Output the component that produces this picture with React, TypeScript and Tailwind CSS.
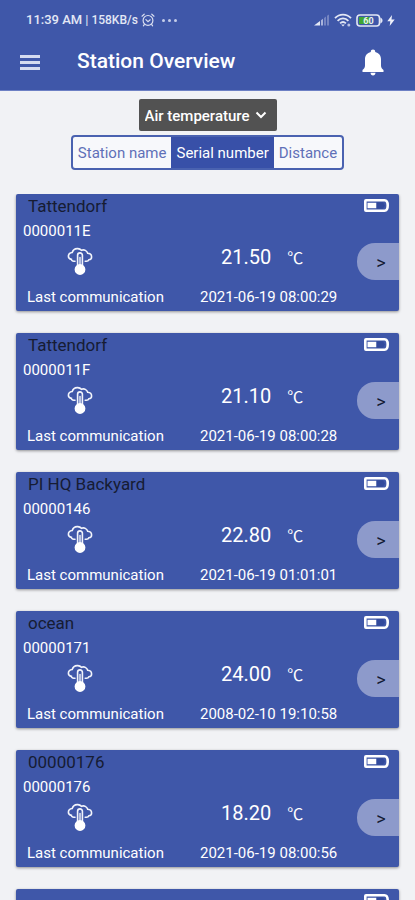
import { useState } from "react";

type Station = {
  id: number;
  name: string;
  serial: string;
  value: string;
  lastSeen: string;
};

const stations: Station[] = [
  { id: 1, name: "Tattendorf", serial: "0000011E", value: "21.50", lastSeen: "2021-06-19 08:00:29" },
  { id: 2, name: "Tattendorf", serial: "0000011F", value: "21.10", lastSeen: "2021-06-19 08:00:28" },
  { id: 3, name: "PI HQ Backyard", serial: "00000146", value: "22.80", lastSeen: "2021-06-19 01:01:01" },
  { id: 4, name: "ocean", serial: "00000171", value: "24.00", lastSeen: "2008-02-10 19:10:58" },
  { id: 5, name: "00000176", serial: "00000176", value: "18.20", lastSeen: "2021-06-19 08:00:56" },
  { id: 6, name: "", serial: "", value: "", lastSeen: "" },
];

const sortOptions = ["Station name", "Serial number", "Distance"];

const AlarmIcon = () => (
  <svg viewBox="0 0 14 14" className="w-3.5 h-3.5" fill="none" stroke="#d9def0" strokeWidth="1.2" strokeLinecap="round">
    <circle cx="7" cy="7.4" r="4.9" />
    <path d="M4.9 6.6 7 8.6l2.2-1.8M1 3.2 3.2 1.2M13 3.2l-2.2-2M3.4 11.4l-1 1.4M10.6 11.4l1 1.4" />
  </svg>
);

const SignalIcon = () => (
  <svg viewBox="0 0 17 12" className="w-[17px] h-3">
    <path d="M1 11.5 7 7v4.5z" fill="#e3e7f5" />
    <path d="M8 6.3 10 4.8v6.7H8z" fill="#a9b4dc" />
    <path d="M11 4 13 2.6v8.9h-2zM14 1.8 16 .5v11h-2z" fill="#7585c2" />
  </svg>
);

const WifiIcon = () => (
  <svg viewBox="0 0 18 14" className="w-[18px] h-3.5" fill="none" stroke="#e3e7f5" strokeWidth="1.8">
    <path d="M1 5.2C5.5.4 12.5.4 17 5.2M3.6 7.8c3.1-3.2 7.7-3.2 10.8 0M6.1 10.3c1.8-1.7 4-1.7 5.8 0" />
    <path d="M9 13.4 7.2 11.4h3.6z" fill="#e3e7f5" stroke="none" />
    <circle cx="14.8" cy="12" r="1.5" fill="#b9c3e6" stroke="none" />
  </svg>
);

const PhoneBattery = () => (
  <svg viewBox="0 0 27 13" className="w-[27px] h-[13px]">
    <rect x="1" y="1" width="22.5" height="11" rx="3" fill="#3f57a9" stroke="#e3e7f5" strokeWidth="1.6" />
    <path d="M24.3 3.500c1.500.5 2.200 1.700 2.200 3s-.7 2.500-2.200 3z" fill="#e3e7f5" />
    <path d="M3 3h11v7H3z" fill="#3fa535" />
    <text x="12.5" y="9.7" textAnchor="middle" fontSize="9" fontWeight="700" fill="#e9f3ea">
      60
    </text>
  </svg>
);

const BoltIcon = () => (
  <svg viewBox="0 0 8 11" className="w-2 h-[11px]" fill="#eef0fa">
    <path d="M5 0 .3 6.300h3L2.700 11 7.700 4.400H4.500z" />
  </svg>
);

const BellIcon = () => (
  <svg viewBox="0 0 22 27" className="w-[22px] h-[27px]" fill="#fff">
    <path d="M11 .5c-1.300 0-2.200.9-2.200 2v.6C5.200 3.900 3 6.600 3 10.400v6.100c0 1.700-.8 3.300-2.500 4.600v1.900h21v-1.900c-1.700-1.300-2.500-2.900-2.500-4.600v-6.100c0-3.800-2.200-6.500-5.800-7.300v-.6c0-1.100-.9-2-2.200-2z" />
    <path d="M8.500 23.700h5c0 1.600-1.100 2.700-2.500 2.700s-2.500-1.100-2.500-2.700z" />
  </svg>
);

const CloudThermometer = () => (
  <svg viewBox="0 0 26 28" className="w-[26px] h-7" fill="none" stroke="#f2f4fb" strokeWidth="1.6" strokeLinecap="round">
    <path d="M8 14.200H6.800C5 14.200 4.300 13 4.400 12.400 2.500 12 1.400 10.800 1.400 9.200 1.400 7 3 5.800 5.200 5.500 6 2.800 8.300 1.400 10.800 1.600c1.500.1 2.700.7 3.600 1.700 2.700-1.100 5.600.3 6.300 3 2.200.2 3.900 1.500 3.900 3.600 0 1.700-1.100 2.700-2.700 2.900-.4 1-1.300 1.400-2.500 1.400h-1.200" />
    <path d="M10.600 19V8.300a2.400 2.400 0 0 1 4.800 0V19" />
    <path d="M13 10.500V20" strokeWidth="1.400" />
    <circle cx="13" cy="22.500" r="4.600" fill="#fff" stroke="#fff" />
  </svg>
);

const StationBattery = () => (
  <svg viewBox="0 0 25 13" className="w-[25px] h-[13px]">
    <path d="M2 1.300h18.500c2 0 3.200 2.200 3.200 5.200s-1.200 5.200-3.200 5.200H2a.7.7 0 0 1-.7-.7V2a.7.7 0 0 1 .7-.7z" fill="#3f57a9" stroke="#fff" strokeWidth="2.600" />
    <path d="M3.500 3.800h9v5.400h-9z" fill="#fff" />
    <path d="M12.500 3.300h6.500l2 3.200-2 3.200h-6.500z" fill="#324a9c" />
  </svg>
);

const StationCard = ({ station }: { station: Station }) => (
  <li className="shrink-0 bg-[#3f57a9] rounded-xs shadow-[0_1px_3px_rgba(0,0,0,0.4)] text-white pb-[3px]">
    <div className="flex justify-between pl-3 pr-2.5 h-6">
      <h2 className="text-[17px] leading-6 text-[#161c33]">{station.name}</h2>
      <span className="pt-[5px]">
        <StationBattery />
      </span>
    </div>
    <p className="h-[25px] pl-[7px] text-[15px] leading-[26px]">{station.serial}</p>
    <div className="flex h-[37px]">
      <div className="w-1/3 flex justify-center pt-1">
        <CloudThermometer />
      </div>
      <p className="w-1/3 text-right text-xl leading-7">{station.value}</p>
      <p className="ml-4 text-base leading-7 font-['Noto_Sans_CJK_JP',sans-serif]">{station.value && "℃"}</p>
      <button
        type="button"
        aria-label={"Open " + station.name}
        className="ml-auto w-[42px] pl-1.5 pt-[3px] rounded-l-[18px] bg-[#8d9acb] text-[#141a33] text-lg leading-7"
      >
        &gt;
      </button>
    </div>
    <div className="flex mt-1 pl-[11px] h-6 text-[15px] leading-[26px]">
      <p className="w-[173px]">Last communication</p>
      <p>{station.lastSeen}</p>
    </div>
  </li>
);

const App = () => {
  const [sortBy, setSortBy] = useState("Serial number");

  return (
    <div className="h-screen flex flex-col overflow-hidden bg-[#f1f2f5] font-[Roboto,sans-serif]">
      <header className="shrink-0 bg-[#3f57a9] text-white pb-1 border-b border-[#6d80c4]">
        <div className="flex items-center justify-between h-10 pl-[26px] pr-5 text-[#e3e7f5] font-medium">
          <div className="flex items-center gap-[3px] text-[13px]">
            <span>11:39 AM</span>
            <span className="font-normal">|</span>
            <span className="text-xs">158KB/s</span>
            <AlarmIcon />
            <span className="flex gap-[3px] ml-1">
              <i className="size-[3px] rounded-full bg-[#c5cdea]" />
              <i className="size-[3px] rounded-full bg-[#c5cdea]" />
              <i className="size-[3px] rounded-full bg-[#c5cdea]" />
            </span>
          </div>
          <div className="flex items-center gap-1">
            <SignalIcon />
            <WifiIcon />
            <PhoneBattery />
            <BoltIcon />
          </div>
        </div>
        <div className="flex items-center h-11 pl-5 pr-[31px] mb-0.5">
          <button type="button" aria-label="Menu" className="flex flex-col gap-[3px] w-5">
            <span className="h-[3px] bg-[#d5dbf0]" />
            <span className="h-[3px] bg-[#d5dbf0]" />
            <span className="h-[3px] bg-[#d5dbf0]" />
          </button>
          <h1 className="ml-[37px] text-[21px] font-medium">Station Overview</h1>
          <button type="button" aria-label="Notifications" className="ml-auto">
            <BellIcon />
          </button>
        </div>
      </header>

      <main className="flex-1 min-h-0 flex flex-col pt-2">
        <div className="grid self-center items-center">
          <select
            aria-label="Measurement"
            className="col-start-1 row-start-1 appearance-none w-[138px] h-8 pl-1.5 pt-0.5 rounded-xs bg-[#525252] text-white text-[15px] font-medium"
          >
            <option>Air temperature</option>
          </select>
          <svg
            viewBox="0 0 12 8"
            className="col-start-1 row-start-1 justify-self-end mr-2.5 w-3 h-2 pointer-events-none"
            fill="none"
            stroke="#fff"
            strokeWidth="2"
          >
            <path d="M1.500 1.500 6 6l4.500-4.500" />
          </svg>
        </div>

        <div className="self-center mt-1 flex h-[35px] rounded-sm border-2 border-[#4a62b0] overflow-hidden bg-[#f7f8fb]">
          {sortOptions.map((option) => (
            <button
              key={option}
              type="button"
              onClick={() => setSortBy(option)}
              className={
                option === sortBy
                  ? "px-[5px] pt-0.5 text-[15px] bg-[#3850a8] text-white"
                  : "px-[5px] pt-0.5 text-[15px] text-[#5f70b8]"
              }
            >
              {option}
            </button>
          ))}
        </div>

        <ul className="flex-1 min-h-0 flex flex-col gap-[22px] mt-6 px-4 overflow-hidden">
          {stations.map((station) => (
            <StationCard key={station.id} station={station} />
          ))}
        </ul>
      </main>
    </div>
  );
};

export default App;
